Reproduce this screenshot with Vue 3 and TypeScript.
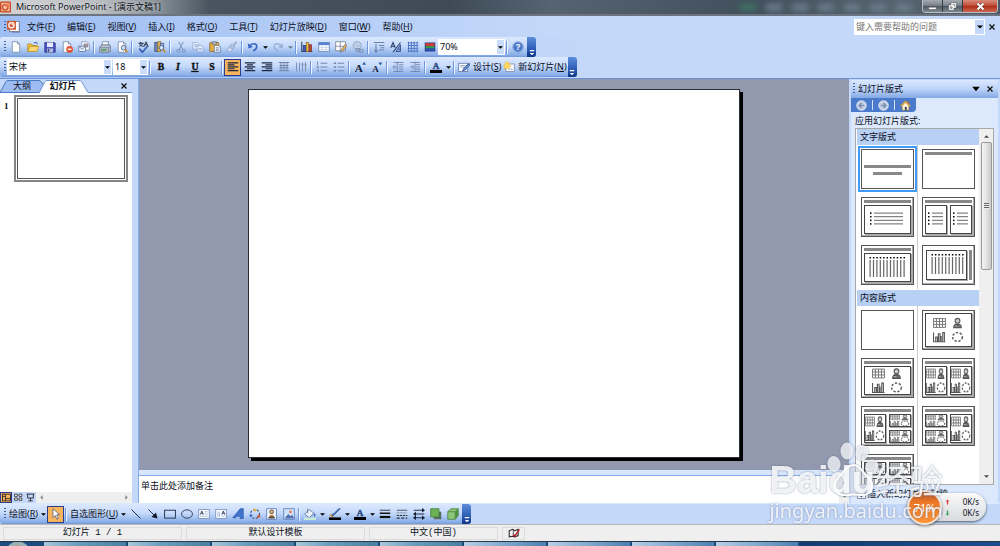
<script setup lang="ts">
import { ref } from 'vue'

interface Tool { t: 'icon' | 'sep' | 'arrow' | 'select' | 'label'; icon?: string; name?: string; key?: string; off?: boolean; on?: boolean; value?: string; size?: string }

const page = '<path d="M3 1h7l3 3v11H3z" fill="#fff" stroke="#6f7f9c"/><path d="M10 1v3h3" fill="#cdd8ec" stroke="#6f7f9c"/>'
const lens = '<circle cx="10" cy="9" r="3" fill="#cfe3f7" stroke="#4e6a96" stroke-width="1.3"/><path d="M12 11l3 4" stroke="#c88a34" stroke-width="2.4"/>'
const bars = (w: number[][]) => '<path d="' + w.map(([x, n], i) => `M${x} ${2.5 + i * 2.6}h${n}`).join('') + '" stroke="#1d2740" stroke-width="1.6"/>'
const letter = (c: string, extra = '') => `<text x="8" y="12" text-anchor="middle" font-family="Liberation Serif, serif" font-weight="bold" font-size="13" fill="#111" stroke="#111" stroke-width=".5" ${extra}>${c}</text>`

const icons: Record<string, string> = {
  ppt: '<rect x="3" y="2" width="12" height="12" fill="#fff" stroke="#7b6b78"/><path d="M6 15h10V4" fill="none" stroke="#677da5"/><rect x="0" y="1" width="11" height="11" fill="#d25a35"/><circle cx="5.5" cy="6.5" r="3.2" fill="none" stroke="#fff" stroke-width="1.6"/><path d="M5.500 6.500V3h3.500v3.500z" fill="#fbd6bd"/>',
  new: page,
  open: '<path d="M1 14V4h5l1 2h6v3" fill="#f5c94d" stroke="#ab8123"/><path d="M1 14l3-7h12l-3 7z" fill="#ffd970" stroke="#b88a23"/><path d="M9 3c2-2 4-1 5 1" fill="none" stroke="#426fb9" stroke-width="1.4"/>',
  save: '<path d="M1 2h13l1 1v12H1z" fill="#4b53c4" stroke="#303787"/><rect x="4" y="2" width="8" height="6" fill="#e8eeff"/><rect x="4" y="10" width="8" height="5" fill="#b5bdd8"/><path d="M6 11v3" stroke="#26306a" stroke-width="2"/>',
  perm: page + '<circle cx="11.500" cy="11" r="4.500" fill="#e2502d"/><path d="M9 11h5" stroke="#fff" stroke-width="1.800"/>',
  mail: '<path d="M5 1h7l3 3v8H5z" fill="#fff" stroke="#7788a8"/><path d="M8 4h5v4H8z" fill="#dd9d8f" stroke="#56719c"/><path d="M1 7h9v7H1z" fill="#e7eefb" stroke="#5c6f95"/><path d="M1 7l4.500 4L10 7" fill="none" stroke="#5c6f95"/>',
  print: '<path d="M5 1h8l-2 6H3z" fill="#fff" stroke="#6e7a90"/><path d="M1 8l3-3h10l2 3v5l-3 2H1z" fill="#b8c1d1" stroke="#5f6b82"/><path d="M1 9h12l3-2M13 9v6" fill="none" stroke="#6e7a90"/><path d="M3 12h7" stroke="#3f9a4a" stroke-width="2"/>',
  preview: page + lens,
  spell: '<path d="M2 3h7M5 1v3M3 7c3-1 4-2 5-4M3 3c1 3 3 4 6 4" fill="none" stroke="#28364f" stroke-width="1.300"/><path d="M9 8l3-7 3 7M10 5h4" fill="none" stroke="#28364f" stroke-width="1.300"/><path d="M3 10l4 5 7-8" fill="none" stroke="#3a62b5" stroke-width="2.400"/>',
  research: '<rect x="1" y="2" width="4" height="12" fill="#6e84bd" stroke="#3f5083"/><rect x="5" y="1" width="4" height="13" fill="#e5b755" stroke="#8a6a2b"/><rect x="9" y="3" width="4" height="8" fill="#9ebbe8" stroke="#3f5083"/>' + lens,
  cut: '<path d="M5 1l5 10M11 1L6 11" stroke="#6d83ab" stroke-width="1.500"/><circle cx="4.500" cy="13" r="2" fill="none" stroke="#6d83ab" stroke-width="1.400"/><circle cx="11.500" cy="13" r="2" fill="none" stroke="#6d83ab" stroke-width="1.400"/>',
  copy: '<path d="M1 2h6l2 2v7H1z" fill="#edf3ff" stroke="#7f93b7"/><path d="M7 6h6l2 2v7H7z" fill="#edf3ff" stroke="#7f93b7"/><path d="M3 5h4M3 7h4M9 10h4M9 12h4" stroke="#7f93b7"/>',
  paste: '<rect x="1" y="2" width="12" height="12" rx="1" fill="#e3ae42" stroke="#8a6420"/><path d="M4 1h6v3H4z" fill="#bac6db" stroke="#5d6a80"/><path d="M7 6h6l2 2v7H7z" fill="#fff" stroke="#586e99"/><path d="M9 9h4M9 11h4M9 13h4" stroke="#586e99"/>',
  brush: '<path d="M14 1l-4 5" stroke="#8495b2" stroke-width="2.500"/><path d="M7 4l5 4-3 3-5-3z" fill="#a9b8cf" stroke="#8495b2"/><path d="M4 8l5 3-4 4-4-2z" fill="#dce5f4" stroke="#8495b2"/>',
  undo: '<path d="M3 7c4-5 10-4 10 0 0 3-2 5-5 6" fill="none" stroke="#3567c2" stroke-width="2.200"/><path d="M1 3l1 7 6-2z" fill="#3567c2"/>',
  redo: '<path d="M13 7C9 2 3 3 3 7c0 3 2 5 5 6" fill="none" stroke="#8aa0c6" stroke-width="1.800"/><path d="M15 3l-1 7-6-2z" fill="#8aa0c6"/>',
  chart: '<path d="M1 1v13h14" fill="none" stroke="#38476b" stroke-width="1.500"/><rect x="3" y="6" width="3" height="8" fill="#385ec2" stroke="#273d80"/><rect x="7" y="2" width="3" height="12" fill="#f4c83c" stroke="#8a6420"/><rect x="11" y="5" width="3" height="9" fill="#cf4a38" stroke="#7b2c22"/>',
  table: '<rect x="1" y="2" width="14" height="12" fill="#fff" stroke="#5874a7"/><rect x="1" y="2" width="14" height="3.500" fill="#5683d3"/><path d="M1 8.500h14M1 11.500h14M5.500 5v9M10.500 5v9" stroke="#bdcbe5"/>',
  borders: '<rect x="1" y="1" width="13" height="12" fill="#fff" stroke="#727b8d"/><path d="M1 7h13M7 1v12" stroke="#727b8d"/><path d="M14 4l-6 8-1 3 3-1 6-8z" fill="#f1b43c" stroke="#5f6f9b"/>',
  link: '<circle cx="7" cy="6" r="5.500" fill="#aebed8" stroke="#7789aa"/><path d="M3 4c3 2 5-2 8 1M2 8c4-1 6 2 9 0" fill="none" stroke="#d9e3f2"/><rect x="5" y="10" width="6" height="4" rx="2" fill="none" stroke="#6d7e9c" stroke-width="1.500"/><rect x="9" y="11" width="6" height="4" rx="2" fill="none" stroke="#6d7e9c" stroke-width="1.500"/>',
  expand: '<path d="M1 2h14M4 4v10M2 12l2 3 2-3M8 6h7M10 9h5M8 12h7" fill="none" stroke="#6c83ad" stroke-width="1.500"/>',
  format: '<path d="M1 9L4 2l3 7M2 7h4M4 15L14 2" fill="none" stroke="#263b66" stroke-width="1.400"/><path d="M8 14l6-9v9zM11 11h3" fill="#84a2d5" stroke="#3b5b98" stroke-width="1.300"/>',
  grid: '<path d="M2 1v14M5.800 1v14M9.600 1v14M13.500 1v14M1 2.500h14M1 6h14M1 9.800h14M1 13.500h14" stroke="#4c74c2" stroke-width="1.300"/>',
  color: '<rect x="1" y="2" width="14" height="12" fill="#273f86"/><rect x="2" y="3" width="12" height="4" fill="#d83b35"/><rect x="2" y="7" width="12" height="3" fill="#2fa24b"/><rect x="2" y="10" width="12" height="3" fill="#2c51b8"/>',
  help: '<circle cx="8" cy="8" r="7" fill="#4c79ca" stroke="#8facdf" stroke-width="1.500"/><text x="8" y="12" text-anchor="middle" font-family="Liberation Sans, sans-serif" font-weight="bold" font-size="11" fill="#fff">?</text>',
  bold: letter('B'), italic: letter('I', 'font-style="italic"'), under: letter('U', 'text-decoration="underline"'), shadowS: letter('S'),
  left: bars([[1, 14], [1, 9], [1, 14], [1, 9], [1, 14]]),
  center: bars([[1, 14], [4, 8], [1, 14], [4, 8], [1, 14]]),
  right: bars([[1, 14], [6, 9], [1, 14], [6, 9], [1, 14]]),
  dist: '<path d="M1 2h14M2 6h12M2 9h12M1 13h14M4 2v11M8 2v11M12 2v11" stroke="#6f83aa" stroke-width="1.300"/>',
  vtext: '<path d="M2 2v12M6 2v12M10 4v10M14 4v10M9 6l1-3 1 3M13 6l1-3 1 3" fill="none" stroke="#7d92b8" stroke-width="1.400"/>',
  numbers: '<path d="M6 3h9M6 8h9M6 13h9M2 1v4M1 7h2v2H1M1 12h2v3" fill="none" stroke="#7186ae" stroke-width="1.300"/>',
  bullets: '<path d="M6 3h9M6 8h9M6 13h9" stroke="#7186ae" stroke-width="1.300"/><path d="M1 3h3M1 8h3M1 13h3" stroke="#7186ae" stroke-width="2"/>',
  grow: '<text x="6.500" y="14" text-anchor="middle" font-family="Liberation Serif, serif" font-weight="bold" font-size="15" fill="#18223d">A</text><path d="M11 5l2.500-4L16 5z" fill="#31569f"/>',
  shrink: '<text x="6" y="14" text-anchor="middle" font-family="Liberation Serif, serif" font-weight="bold" font-size="12" fill="#18223d">A</text><path d="M10 2h5l-2.500 4z" fill="#31569f"/>',
  outdent: '<path d="M2 2h13M9 5h6M9 8h6M9 11h6M2 14h13M7 8H2M4 5L1 8l3 3M7 1v14" fill="none" stroke="#6e84ae" stroke-width="1.200"/>',
  indent: '<path d="M2 2h13M9 5h6M9 8h6M9 11h6M2 14h13M1 8h5M4 5l3 3-3 3M8 1v14" fill="none" stroke="#6e84ae" stroke-width="1.200"/>',
  fontColor: '<text x="8" y="11" text-anchor="middle" font-family="Liberation Serif, serif" font-weight="bold" font-size="12" fill="#27457f" stroke="#27457f" stroke-width=".5">A</text><rect x="0" y="12" width="16" height="4" fill="#000"/>',
  design: '<rect x="1" y="3" width="12" height="11" fill="#fff" stroke="#546fa5"/><path d="M3 6h7M3 8h5" stroke="#8193b5"/><path d="M15 3l-7 6-2 4 4-1 6-7z" fill="#5d88d3" stroke="#36588e"/>',
  newSlide: '<rect x="4" y="4" width="11" height="10" fill="#fff" stroke="#7084a8"/><path d="M7 11h6" stroke="#7c92bc"/><path d="M5 0l1 3 3-1-1 3 3 2-3 1 0 3-3-2-3 2V8L0 6l3-1V2z" fill="#ffd95f" stroke="#e1ac2c" stroke-width=".6"/>',
  pointer: '<path d="M4 1v12l3-3 2 5 2-1-2-5h4z" fill="#fff" stroke="#4c5879"/>',
  line: '<path d="M2 2l12 12" stroke="#222c42" stroke-width="1.300"/>',
  lineArrow: '<path d="M2 2l8 8" stroke="#222c42" stroke-width="1.300"/><path d="M14 14l-2-8-6 6z" fill="#111827"/>',
  rect: '<rect x="0.700" y="3" width="14.600" height="10.500" fill="none" stroke="#35435f" stroke-width="1.400"/>',
  oval: '<ellipse cx="8" cy="8" rx="7.200" ry="5.600" fill="none" stroke="#35435f" stroke-width="1.300"/>',
  textBox: '<rect x="1" y="2" width="14" height="12" fill="#f7faff" stroke="#6f86af"/><path d="M3 9l2-5 2 5M4 7h3" fill="none" stroke="#1e2a43"/><path d="M9 5h4M9 8h4M3 11h10" stroke="#9cb0d1"/>',
  vTextBox: '<rect x="1" y="2" width="14" height="12" fill="#f7faff" stroke="#6f86af"/><path d="M9 9l2-5 2 5M10 7h3" fill="none" stroke="#1e2a43"/><path d="M4 5v7M6 5v7M9 11h4" stroke="#9cb0d1"/>',
  wordArt: '<path d="M1 13L11 1h4v13h-4v-3H6l-1 2zM8 8h3V5z" fill="#3d76d2" stroke="#2c57a5" fill-rule="evenodd"/>',
  diagram: '<circle cx="8" cy="8" r="6" fill="none" stroke="#445371" stroke-width="1.500" stroke-dasharray="3 2"/><circle cx="8" cy="2.500" r="2" fill="#e5b343"/><circle cx="2.500" cy="10" r="2" fill="#4775c6"/><circle cx="13" cy="11" r="2" fill="#d05a42"/>',
  clip: '<rect x="1" y="1" width="13" height="14" fill="#eef3ff" stroke="#5474ac"/><circle cx="7.500" cy="5" r="2.500" fill="#e8b269" stroke="#37332f"/><path d="M3 14c0-5 9-5 9 0z" fill="#524940"/><path d="M5 10h5" stroke="#e58b35" stroke-width="2"/>',
  picture: '<rect x="1" y="1" width="14" height="14" fill="#cfe0fb" stroke="#5474ac"/><circle cx="10" cy="5" r="2" fill="#e58362"/><path d="M2 14l5-6 3 3 2-2 3 5z" fill="#506eab"/>',
  fill: '<path d="M7 2l6 5-6 6-6-5z" fill="#eef3fb" stroke="#54688c"/><path d="M5 1v6" stroke="#54688c"/><path d="M13 6c3 2 3 4 1 6-2-2-1-4-1-6z" fill="#4b78c5"/><rect x="0" y="13" width="16" height="3" fill="#c8ead7"/>',
  lineColor: '<path d="M15 1L7 9l-3 3-2-2 5-3 6-6z" fill="#4b7cd1" stroke="#2a4c8e"/><path d="M1 10c2-2 5 0 3 2" fill="#f2b33b" stroke="#b8801f"/><rect x="0" y="12.500" width="16" height="3.500" fill="#000"/>',
  weights: '<path d="M1 3h14" stroke="#111"/><path d="M1 7h14" stroke="#111" stroke-width="2"/><path d="M1 12h14" stroke="#111" stroke-width="3"/>',
  dashes: '<path d="M1 3h14" stroke="#333"/><path d="M1 6.500h14" stroke="#333" stroke-dasharray="1 1"/><path d="M1 10h14" stroke="#333" stroke-width="1.400" stroke-dasharray="3 1"/><path d="M1 13.500h14" stroke="#333" stroke-width="1.400" stroke-dasharray="4 2"/>',
  arrows: '<path d="M1 3h13M2 8h13M1 13h14" stroke="#222c42" stroke-width="1.300"/><path d="M12 0l4 3-4 3zM4 5L0 8l4 3zM12 10l4 3-4 3zM4 10l-4 3 4 3z" fill="#17202f"/>',
  shadow: '<rect x="5" y="5" width="10" height="10" fill="#586b60"/><rect x="1" y="1" width="11" height="11" fill="#6bb254" stroke="#3d7c35"/>',
  cube: '<path d="M1 5l4-4h10v9l-4 5H1z" fill="#8bc575" stroke="#3d7c35"/><path d="M1 5h10v10M11 5l4-4" fill="none" stroke="#3d7c35"/><path d="M11 5l4-4v9l-4 5z" fill="#4e9145"/>',
  book: '<path d="M1 13V4l5-2 3 2 5-2v9l-5 2-3-1z" fill="#eee" stroke="#222" stroke-width="1.500"/><path d="M7 3v9" stroke="#222"/><path d="M7 9l2 3 7-10" fill="none" stroke="#b81e22" stroke-width="2"/>',
  back: '<circle cx="8" cy="8" r="7" fill="#c4cfe2" stroke="#f1f5fc"/><path d="M12 8H5M8 4.500L4.500 8 8 11.500" fill="none" stroke="#7b8eb2" stroke-width="2"/>',
  next: '<circle cx="8" cy="8" r="7" fill="#c4cfe2" stroke="#f1f5fc"/><path d="M4 8h7M8 4.500L11.500 8 8 11.500" fill="none" stroke="#7b8eb2" stroke-width="2"/>',
  home: '<path d="M11 2h2v5h-2z" fill="#c75b2d"/><path d="M3 8l5-5 5 5v7H3z" fill="#fff3d2" stroke="#86693c"/><path d="M1 9l7-7 7 7" fill="none" stroke="#e6a334" stroke-width="1.800"/><rect x="7" y="10" width="3" height="5" fill="#4a5270"/>',
  normal: '<rect x="1" y="2" width="14" height="12" fill="none" stroke="#222" stroke-width="1.500"/><path d="M6 2v12M6 10h9M1 6h5" stroke="#222" stroke-width="1.500"/>',
  sorter: '<path d="M1 2h5v4H1zM9 2h5v4H9zM1 9h5v4H1zM9 9h5v4H9z" fill="#fff" stroke="#222" stroke-width="1.400"/>',
  show: '<path d="M1 2h14M3 2v7h10V2M8 9v5M4 14h8" fill="none" stroke="#222" stroke-width="1.600"/>',
  close: '<path d="M4 4l8 8M12 4l-8 8" stroke="#111" stroke-width="2"/>',
}

const i = (icon: string, name: string, opt: Partial<Tool> = {}): Tool => ({ t: 'icon', icon, name, ...opt })
const sep: Tool = { t: 'sep' }
const arrow: Tool = { t: 'arrow' }

const standard: Tool[] = [
  i('new', '新建'), i('open', '打开'), i('save', '保存'), i('perm', '权限'), i('mail', '电子邮件'), sep,
  i('print', '打印'), i('preview', '打印预览'), sep, i('spell', '拼写检查'), i('research', '信息检索'), sep,
  i('cut', '剪切', { off: true }), i('copy', '复制', { off: true }), i('paste', '粘贴'), i('brush', '格式刷', { off: true }), sep,
  i('undo', '撤消'), arrow, i('redo', '恢复', { off: true }), { t: 'arrow', off: true }, sep,
  i('chart', '插入图表'), i('table', '插入表格'), i('borders', '表格和边框'), i('link', '超链接', { off: true }), sep,
  i('expand', '全部展开'), i('format', '显示格式'), i('grid', '网格'), i('color', '颜色/灰度'),
  { t: 'select', value: '70%', name: '显示比例', size: 'zoom' }, sep, i('help', '帮助'),
]
const formatting: Tool[] = [
  { t: 'select', value: '宋体', name: '字体', size: 'font' }, { t: 'select', value: '18', name: '字号', size: 'pt' }, sep,
  i('bold', '加粗'), i('italic', '倾斜'), i('under', '下划线'), i('shadowS', '阴影'), sep,
  i('left', '左对齐', { on: true }), i('center', '居中'), i('right', '右对齐'), i('dist', '分散对齐'), i('vtext', '更改文字方向'), sep,
  i('numbers', '编号'), i('bullets', '项目符号'), sep, i('grow', '增大字号'), i('shrink', '减小字号'), sep,
  i('outdent', '减少缩进量'), i('indent', '增加缩进量'), sep, i('fontColor', '字体颜色'), arrow, sep,
  { t: 'label', icon: 'design', name: '设计', key: 'S' }, { t: 'label', icon: 'newSlide', name: '新幻灯片', key: 'N' },
]
const drawing: Tool[] = [
  { t: 'label', name: '绘图', key: 'R' }, arrow, i('pointer', '选择对象', { on: true }), sep,
  { t: 'label', name: '自选图形', key: 'U' }, arrow,
  i('line', '直线'), i('lineArrow', '箭头'), i('rect', '矩形'), i('oval', '椭圆'), i('textBox', '文本框'), i('vTextBox', '竖排文本框'),
  i('wordArt', '艺术字'), i('diagram', '图示'), i('clip', '剪贴画'), i('picture', '图片'), sep,
  i('fill', '填充颜色'), arrow, i('lineColor', '线条颜色'), arrow, i('fontColor', '字体颜色'), arrow,
  i('weights', '线型'), i('dashes', '虚线线型'), i('arrows', '箭头样式'), i('shadow', '阴影样式'), i('cube', '三维效果样式'),
]
const toolbars = [{ id: 'standard', label: '常用', tools: standard }, { id: 'formatting', label: '格式', tools: formatting }]
const drawbars = [{ id: 'drawing', label: '绘图', tools: drawing }]

const menus = [['文件', 'F'], ['编辑', 'E'], ['视图', 'V'], ['插入', 'I'], ['格式', 'O'], ['工具', 'T'], ['幻灯片放映', 'D'], ['窗口', 'W'], ['帮助', 'H']]

interface Box { x: number; y: number; w: number; h: number; k?: 'rows' | 'cols' | 'art' }
interface Layout { name: string; bars: Box[]; boxes: Box[] }
const b = (x: number, y: number, w: number, h: number, k?: Box['k']): Box => ({ x, y, w, h, k })
const top = b(3, 3, 47, 3)
const groups: { title: string; items: Layout[] }[] = [
  { title: '文字版式', items: [
    { name: '标题幻灯片', bars: [b(3, 16, 47, 3), b(12, 23, 29, 3)], boxes: [] },
    { name: '只有标题', bars: [top], boxes: [] },
    { name: '标题和文本', bars: [top], boxes: [b(3, 8, 47, 29, 'rows')] },
    { name: '标题和两栏文本', bars: [top], boxes: [b(3, 8, 22, 29, 'rows'), b(28, 8, 22, 29, 'rows')] },
    { name: '标题和竖排文字', bars: [top], boxes: [b(3, 8, 47, 29, 'cols')] },
    { name: '垂直排列标题与文本', bars: [b(47, 5, 3, 30)], boxes: [b(4, 5, 41, 30, 'cols')] },
  ] },
  { title: '内容版式', items: [
    { name: '空白', bars: [], boxes: [] },
    { name: '内容', bars: [], boxes: [b(3, 3, 47, 34, 'art')] },
    { name: '标题和内容', bars: [top], boxes: [b(3, 8, 47, 29, 'art')] },
    { name: '标题和两项内容', bars: [top], boxes: [b(3, 8, 22, 29, 'art'), b(28, 8, 22, 29, 'art')] },
    { name: '一项大型内容和两项小型内容', bars: [top], boxes: [b(3, 8, 22, 29, 'art'), b(28, 8, 22, 13, 'art'), b(28, 24, 22, 13, 'art')] },
    { name: '两项小型内容和一项大型内容', bars: [top], boxes: [b(3, 8, 22, 13, 'art'), b(3, 24, 22, 13, 'art'), b(28, 8, 22, 29, 'art')] },
    { name: '标题和四项内容', bars: [top], boxes: [b(3, 8, 22, 13, 'art'), b(28, 8, 22, 13, 'art'), b(3, 24, 22, 13, 'art'), b(28, 24, 22, 13, 'art')] },
  ] },
]
const chosen = ref('标题幻灯片')

const colXs = (o: Box) => Array.from({ length: Math.floor((o.w - 10) / 3.4) + 1 }, (_, n) => o.x + 5.5 + n * 3.4)
const rowYs = (o: Box) => [0, 1, 2, 3].map(n => o.y + 8 + n * 3.6)
const arts = (o: Box) => {
  const wide = o.w > 30
  const w = wide ? 13 : 10
  const h = o.h > 20 ? 11 : 6
  const px = wide ? 8 : 1
  const py = o.h > 20 ? (o.h - 25) / 2 : 0.5
  return ['table', 'person', 'graph', 'cycle'].map((s, n) => ({
    s, w, h,
    x: n % 2 ? o.x + o.w - px - w : o.x + px,
    y: n > 1 ? o.y + o.h - py - h : o.y + py,
  }))
}
const notes = ref('单击此处添加备注')
const status = [{ id: 'current', text: '幻灯片 1 / 1' }, { id: 'theme', text: '默认设计模板' }, { id: 'lang', text: '中文(中国)' }]
</script>

<template>
  <div class="app">
    <svg class="defs" aria-hidden="true">
      <symbol id="art-table" viewBox="0 0 12 10" preserveAspectRatio="none"><path d="M.5 1h11v8H.5zM.5 3.600h11M.5 6.300h11M3.200 1v8M6 1v8M8.800 1v8" fill="none" stroke="#777" stroke-width=".9" /></symbol>
      <symbol id="art-person" viewBox="0 0 12 10" preserveAspectRatio="none"><circle cx="6" cy="3" r="2.200" fill="#ccc" stroke="#555" /><path d="M2.500 9c0-4 7-4 7 0zM3.500 6l4.500 2M2 9.500h8" fill="#aaa" stroke="#555" /></symbol>
      <symbol id="art-graph" viewBox="0 0 12 10" preserveAspectRatio="none"><path d="M.5 1v8.500h11M2.500 9V5h1.500v4M5 9V2h1.500v7M7.500 9V4M9 9V1h1.500v8" fill="none" stroke="#555" /></symbol>
      <symbol id="art-cycle" viewBox="0 0 12 10" preserveAspectRatio="none"><ellipse cx="6" cy="5" rx="4.500" ry="4" fill="none" stroke="#666" stroke-width="1.400" stroke-dasharray="2.200 1.400" /></symbol>
    </svg>

    <header class="titlebar">
      <svg class="logo" viewBox="0 0 16 16"><rect width="16" height="16" rx="2" fill="#c94c25" /><rect x="2" y="2" width="12" height="12" fill="#f7c5ab" /><circle cx="7.500" cy="8.500" r="4" fill="none" stroke="#c94c25" stroke-width="2" /><path d="M8 8V3h5v5z" fill="#e87b4d" /></svg>
      <h1>Microsoft PowerPoint - [演示文稿1]</h1>
      <div class="glass"><span v-for="n in 7" :key="n" /></div>
      <div class="winbtns">
        <button aria-label="最小化"><svg viewBox="0 0 12 12"><path d="M1 7h10v3H1z" fill="#fff" stroke="#444" stroke-width=".6" /></svg></button>
        <button aria-label="还原"><svg viewBox="0 0 12 12"><path d="M4 1h7v7H8v3H1V4h3z" fill="#fff" stroke="#444" stroke-width=".6" /><path d="M3.500 6.500h2v2h-2zM6 3.500h2.500V6" fill="none" stroke="#555" /></svg></button>
        <button class="x" aria-label="关闭"><svg viewBox="0 0 12 12"><path d="M2 2l8 8M10 2l-8 8" stroke="#63302a" stroke-width="4" /><path d="M2 2l8 8M10 2l-8 8" stroke="#fff" stroke-width="2.600" /></svg></button>
      </div>
    </header>

    <nav class="menubar">
      <span class="grip" />
      <svg class="docicon" viewBox="0 0 16 16" v-html="icons.ppt" />
      <button v-for="m in menus" :key="m[0]">{{ m[0] }}(<u>{{ m[1] }}</u>)</button>
      <div class="ask">
        <input type="text" aria-label="键入需要帮助的问题" placeholder="键入需要帮助的问题">
        <button class="askdrop" aria-label="历史问题"><svg viewBox="0 0 8 8"><path d="M0 2h8L4 6z" /></svg></button>
        <button aria-label="关闭窗口"><svg class="cross" viewBox="0 0 16 16" v-html="icons.close" /></button>
      </div>
    </nav>

    <div v-for="bar in toolbars" :key="bar.id" class="band">
      <div class="toolbar" role="toolbar" :aria-label="bar.label">
        <span class="grip" />
        <template v-for="(tool, n) in bar.tools" :key="n">
          <span v-if="tool.t === 'sep'" class="sep" />
          <button v-else-if="tool.t === 'arrow'" class="arrow" :class="{ off: tool.off }" aria-label="更多"><svg viewBox="0 0 8 8"><path d="M0 2h8L4 6z" /></svg></button>
          <label v-else-if="tool.t === 'select'" class="combo" :class="tool.size">
            <select :aria-label="tool.name"><option>{{ tool.value }}</option></select>
            <span class="drop"><svg viewBox="0 0 8 8"><path d="M0 2h8L4 6z" /></svg></span>
          </label>
          <button v-else-if="tool.t === 'label'" class="textbtn"><svg v-if="tool.icon" class="ico" viewBox="0 0 16 16" v-html="icons[tool.icon]" />{{ tool.name }}(<u>{{ tool.key }}</u>)</button>
          <button v-else class="tool" :class="{ on: tool.on, off: tool.off }" :aria-label="tool.name"><svg class="ico" viewBox="0 0 16 16" v-html="icons[tool.icon!]" /></button>
        </template>
        <button class="tail" aria-label="工具栏选项"><svg viewBox="0 0 8 8"><path d="M1 0h6v1.500H1zM1 4h6L4 7z" fill="#fff" /></svg></button>
      </div>
    </div>

    <main class="work">
      <aside class="outline">
        <div class="tabs">
          <svg class="tabshape" viewBox="0 0 132 14" aria-hidden="true"><path d="M0 13.500L6 2.500q.5-1 2-1h32l4 5-4 7z" fill="#9ebcf2" stroke="#4a79c4" /><path d="M39 14l6-11.500q.5-1 2-1h32q2 0 2.500 1L88 13.500h44" fill="#fff" stroke="#6f94d0" /><path d="M40 14h47" stroke="#fff" /></svg>
          <button class="tab">大纲</button>
          <button class="tab current">幻灯片</button>
          <button class="closepane" aria-label="关闭"><svg class="cross" viewBox="0 0 16 16" v-html="icons.close" /></button>
        </div>
        <div class="slides">
          <span class="num">1</span>
          <button class="mini" aria-label="幻灯片 1"><span /></button>
        </div>
        <div class="views">
          <button class="on" aria-label="普通视图"><svg viewBox="0 0 16 16" v-html="icons.normal" /></button>
          <button aria-label="幻灯片浏览视图"><svg viewBox="0 0 16 16" v-html="icons.sorter" /></button>
          <button aria-label="幻灯片放映"><svg viewBox="0 0 16 16" v-html="icons.show" /></button>
          <div class="hscroll"><svg viewBox="0 0 8 8"><path d="M6 0v8L2 4z" /></svg><svg viewBox="0 0 8 8"><path d="M2 0v8l4-4z" /></svg></div>
        </div>
      </aside>

      <section class="editor">
        <div class="canvas"><div class="slide" /></div>
        <div class="notes">
          <textarea v-model="notes" aria-label="备注" />
          <div class="nscroll"><svg viewBox="0 0 8 8"><path d="M0 6h8L4 2z" /></svg><svg viewBox="0 0 8 8"><path d="M0 2h8L4 6z" /></svg></div>
        </div>
      </section>

      <aside class="pane">
        <div class="panehead">
          <span class="grip" />
          <h2>幻灯片版式</h2>
          <button aria-label="其他任务窗格"><svg class="tri" viewBox="0 0 10 8"><path d="M0 1h10L5 7z" /></svg></button>
          <button aria-label="关闭"><svg class="cross" viewBox="0 0 16 16" v-html="icons.close" /></button>
        </div>
        <div class="panenav">
          <button aria-label="后退"><svg viewBox="0 0 16 16" v-html="icons.back" /></button><i />
          <button aria-label="前进"><svg viewBox="0 0 16 16" v-html="icons.next" /></button><i />
          <button aria-label="开始"><svg viewBox="0 0 16 16" v-html="icons.home" /></button>
        </div>
        <p class="apply">应用幻灯片版式:</p>
        <div class="listbox">
          <div class="list">
            <section v-for="g in groups" :key="g.title">
              <h3>{{ g.title }}</h3>
              <div class="cells">
                <div v-for="l in g.items" :key="l.name" class="cell">
                  <button :class="{ chosen: chosen === l.name }" :aria-label="l.name" @click="chosen = l.name">
                    <svg viewBox="0 0 53 40">
                      <rect x=".5" y=".5" width="52" height="39" fill="#fff" stroke="#555" />
                      <rect v-for="(r, n) in l.bars" :key="'b' + n" :x="r.x" :y="r.y" :width="r.w" :height="r.h" fill="#888" />
                      <template v-if="l.boxes.length">
                        <path d="M51.500 1v38M1 38.500h51" stroke="#aaa" />
                        <g v-for="(o, n) in l.boxes" :key="n">
                          <rect :x="o.x + 1" :y="o.y + 1" :width="o.w" :height="o.h" fill="#aaa" />
                          <rect :x="o.x + 0.5" :y="o.y + 0.5" :width="o.w - 1" :height="o.h - 1" fill="#fff" stroke="#444" />
                          <template v-if="o.k === 'rows'">
                            <g v-for="y in rowYs(o)" :key="y">
                              <rect :x="o.x + (o.w > 30 ? 6 : 3)" :y="y - 0.6" width="1.5" height="1.5" fill="#000" />
                              <rect :x="o.x + (o.w > 30 ? 10 : 7)" :y="y - 0.4" :width="o.w > 30 ? 29 : 11" height="1" fill="#666" />
                            </g>
                          </template>
                          <template v-else-if="o.k === 'cols'">
                            <g v-for="x in colXs(o)" :key="x">
                              <rect :x="x" :y="o.y + 4" width="1.5" height="1.500" fill="#000" />
                              <rect :x="x" :y="o.y + 7" width="1.2" height="17" fill="#666" />
                            </g>
                          </template>
                          <template v-else>
                            <use v-for="a in arts(o)" :key="a.s" :href="'#art-' + a.s" :x="a.x" :y="a.y" :width="a.w" :height="a.h" />
                          </template>
                        </g>
                      </template>
                    </svg>
                  </button>
                </div>
              </div>
            </section>
          </div>
          <div class="vscroll">
            <svg viewBox="0 0 8 8"><path d="M0 6h8L4 2z" /></svg>
            <span class="thumb"><i /></span>
            <svg class="down" viewBox="0 0 8 8"><path d="M0 2h8L4 6z" /></svg>
          </div>
        </div>
        <label class="insert"><input type="checkbox" checked>插入新幻灯片时放映</label>
      </aside>
    </main>

    <div v-for="bar in drawbars" :key="bar.id" class="band bottom">
      <div class="toolbar" role="toolbar" :aria-label="bar.label">
        <span class="grip" />
        <template v-for="(tool, n) in bar.tools" :key="n">
          <span v-if="tool.t === 'sep'" class="sep" />
          <button v-else-if="tool.t === 'arrow'" class="arrow" aria-label="更多"><svg viewBox="0 0 8 8"><path d="M0 2h8L4 6z" /></svg></button>
          <button v-else-if="tool.t === 'label'" class="textbtn pad">{{ tool.name }}(<u>{{ tool.key }}</u>)</button>
          <button v-else class="tool" :class="{ on: tool.on }" :aria-label="tool.name"><svg class="ico" viewBox="0 0 16 16" v-html="icons[tool.icon!]" /></button>
        </template>
        <button class="tail" aria-label="工具栏选项"><svg viewBox="0 0 8 8"><path d="M1 0h6v1.500H1zM1 4h6L4 7z" fill="#fff" /></svg></button>
      </div>
    </div>

    <footer class="status">
      <span v-for="s in status" :key="s.id" :class="s.id">{{ s.text }}</span>
      <span class="proof"><svg viewBox="0 0 16 16" v-html="icons.book" /></span>
    </footer>
    <div class="taskbar">
      <span class="orb" />
      <span v-for="n in 9" :key="n" class="task" />
      <span class="tray" />
    </div>

    <div class="meter">
      <div class="ball">71%</div>
      <div class="speeds">
        <span><svg viewBox="0 0 8 8"><path d="M4 0l3 3H5v5H3V3H1z" fill="#e03c3c" /></svg>0K/s</span>
        <span><svg viewBox="0 0 8 8"><path d="M4 8l3-3H5V0H3v5H1z" fill="#2aa04a" /></svg>0K/s</span>
      </div>
    </div>

    <div class="watermark">
      <div class="brand">
        <span class="latin">Baidu</span>
        <svg class="paw" viewBox="0 0 56 54" aria-hidden="true"><g fill="#fff" fill-opacity=".75"><ellipse cx="9" cy="22" rx="6.500" ry="8" transform="rotate(-8 9 22)" /><ellipse cx="22" cy="9" rx="6.500" ry="8.500" /><ellipse cx="37" cy="11" rx="6.500" ry="8" transform="rotate(12 37 11)" /><ellipse cx="47" cy="25" rx="6.500" ry="7.500" transform="rotate(12 47 25)" /></g><path d="M29 23c6 0 8 7 13 11 8 7 7 19-5 19-5 0-9-1-14 0-12 2-17-9-10-17 6-6 9-13 16-13z" fill="#fff" fill-opacity=".35" stroke="#fff" stroke-width="2" /></svg>
        <span class="jy">经验</span>
      </div>
      <div class="site">jingyan.baidu.com</div>
    </div>
  </div>
</template>

<style>
html, body { margin: 0; overflow: hidden; }
</style>

<style scoped>
* { box-sizing: border-box; }
.app { position: relative; display: flex; flex-direction: column; height: 100vh; overflow: hidden; background: #c4d8f9; color: #0b0f1a; font: 9px/12px "Noto Sans", "Noto Sans CJK SC", sans-serif; }
.defs { position: absolute; width: 0; height: 0; }
svg { display: block; flex: none; }
button { display: flex; align-items: center; justify-content: center; flex: none; margin: 0; padding: 0; border: 0; background: none; color: inherit; font: inherit; white-space: nowrap; }
h1, h2, h3, p { margin: 0; font-size: 9px; font-weight: normal; }
.grip { flex: none; width: 2px; height: 12px; margin: 0 1px 0 4px; background: repeating-linear-gradient(#44609b 0 1px, transparent 1px 3px); }

.titlebar { display: flex; align-items: center; flex: none; height: 16px; border-bottom: 2px solid #6b7480; background: linear-gradient(90deg, #d3d4d4, #b9bdc0 10%, #838d94 16%, #48545f 21%, #3e4b57 45%, #566371 55%, #42505d 75%, #56636f 90%, #4a5763); overflow: hidden; }
.logo { width: 11px; height: 12px; }
.titlebar h1 { margin-left: 5px; font: 9px/14px "Open Sans", "Noto Sans CJK SC", sans-serif; white-space: nowrap; text-shadow: 0 0 4px #e8e8e8; }
.glass { display: flex; flex: 1; justify-content: flex-end; gap: 10px; padding-right: 10px; filter: blur(3px); }
.glass span { width: 16px; height: 7px; background: #6d7f8e; }
.glass span:first-child { background: #3f7564; }
.winbtns { display: flex; align-self: flex-start; height: 13px; margin-right: 2px; border: 1px solid #b9c0c7; border-top: 0; border-radius: 0 0 4px 4px; overflow: hidden; }
.winbtns button { width: 20px; background: linear-gradient(#a3a9af, #7b838b 45%, #4d5761 50%, #7e8890); border-right: 1px solid #333c45; }
.winbtns .x { width: 34px; border: 0; background: linear-gradient(#d98c7c, #c4503a 45%, #ab2d17 50%, #d1664c); }
.winbtns svg { width: 9px; height: 9px; }

.menubar { display: flex; align-items: center; flex: none; height: 21px; background: linear-gradient(90deg, #9ebdf3, #c4d8f9 55%); }
.docicon { width: 13px; height: 13px; margin-right: 1px; }
.menubar > button { padding: 0 6px; height: 18px; }
.ask { display: flex; align-items: center; margin-left: auto; padding-right: 2px; }
.ask input { width: 121px; height: 16px; padding: 0 2px; border: 0; background: #fff; font: inherit; outline: 0; }
.ask input::placeholder { color: #777; opacity: 1; }
.ask .askdrop { width: 10px; height: 16px; border: 1px solid #fff; border-left: 0; }
.ask button:last-child { width: 12px; margin-left: 1px; }
.askdrop svg { width: 6px; height: 6px; }
.cross { width: 10px; height: 10px; }

.band { display: flex; flex: none; height: 20px; background: linear-gradient(90deg, #a8c4f5, #c4d8f9 60%); }
.band.bottom { height: 21px; border-top: 1px solid #dbe8fd; background: #c4d8f9; }
.band + .band { height: 21px; }
.toolbar { display: flex; align-items: center; height: 20px; border-radius: 3px; background: linear-gradient(#dce9fe, #c6dafb 45%, #86ace6 92%, #6f95d5); }
.tool { width: 17px; height: 17px; }
.ico { width: 12px; height: 12px; }
.tool.off .ico { opacity: .7; }
.tool.on { border: 1px solid #2c3b8e; background: #f9b45e; }
.sep { flex: none; width: 1px; height: 13px; margin: 0 2px 0 1px; background: #6f98da; box-shadow: 1px 0 #eef5ff; }
.arrow { width: 8px; height: 16px; }
.arrow svg { width: 5px; height: 5px; }
.arrow.off { opacity: .45; }
.textbtn { height: 17px; }
.textbtn .ico { margin: 0 3px 0 2px; }
.textbtn.pad { padding: 0 1px 0 2px; }
.tail { align-items: flex-end; width: 9px; height: 20px; margin-left: 1px; padding-bottom: 1px; border-radius: 0 3px 3px 0; background: linear-gradient(#5d8ddb, #3465bc 50%, #0c358b); }
.tail svg { width: 6px; height: 6px; }
.combo { position: relative; display: flex; height: 16px; background: #fff; }
.combo select { flex: 1; min-width: 0; padding: 0 2px; border: 0; background: #fff; color: #0b0f1a; font: 9px/16px "Noto Sans", "Noto Sans CJK SC", sans-serif; appearance: none; }
.combo.font { width: 105px; }
.combo.pt { width: 35px; margin-left: 1px; }
.combo.zoom { width: 67px; }
.drop { display: flex; align-items: center; justify-content: center; width: 9px; border: 1px solid #fff; background: #c9dcfa; }
.drop svg { width: 5px; height: 5px; }

.work { display: flex; flex: 1; min-height: 0; border-top: 1px solid #6b95d8; }
.outline { display: flex; flex: none; flex-direction: column; width: 132px; background: #fff; }
.tabs { position: relative; display: flex; align-items: center; height: 14px; background: #c4d8f9; }
.tabshape { position: absolute; left: 0; top: 0; width: 132px; height: 14px; }
.tab { position: relative; width: 44px; height: 14px; }
.tab.current { width: 38px; font-weight: bold; }
.closepane { position: relative; width: 12px; margin: 0 2px 0 auto; }
.slides { display: flex; flex: 1; padding: 2px 4px 0 4px; }
.num { width: 10px; margin-top: 5px; font: bold 9px/12px "Liberation Serif", serif; }
.mini { align-self: flex-start; flex: 1; height: 87px; padding: 1px; border: 2px solid #858585; background: #fff; }
.mini span { width: 100%; height: 100%; border: 1px solid #555; }
.views { display: flex; align-items: center; height: 11px; background: #c4d8f9; }
.views button { width: 12px; height: 11px; }
.views button.on { border: 1px solid #2c3b8e; background: #f9b45e; }
.views svg { width: 9px; height: 9px; }
.hscroll { display: flex; flex: 1; justify-content: space-between; align-items: center; height: 11px; padding: 0 3px; background: #efefef; }
.hscroll svg { width: 5px; height: 5px; fill: #888; }

.editor { display: flex; flex: 1; flex-direction: column; min-width: 0; margin-left: 6px; border-left: 1px solid #84abe8; }
.canvas { display: flex; flex: 1; justify-content: center; min-height: 0; padding: 10px 0 12px; background: #9299ae; }
.slide { height: 100%; aspect-ratio: 4 / 3; border: 1px solid #2a2d35; background: #fff; box-shadow: 3px 3px #000; }
.notes { display: flex; height: 28px; margin-top: 5px; border-top: 1px solid #84abe8; background: #fff; box-shadow: 0 -5px #d8e6fd; }
.notes textarea { flex: 1; padding: 4px 2px; border: 0; outline: 0; resize: none; overflow: hidden; background: #fff; color: inherit; font: 9px/12px "Noto Sans CJK SC", sans-serif; }
.nscroll { display: flex; flex-direction: column; justify-content: space-between; align-items: center; width: 10px; padding: 4px 0; background: #efefef; }
.nscroll svg { width: 5px; height: 5px; fill: #888; }

.pane { display: flex; flex: none; flex-direction: column; width: 147px; margin: 1px 2px 0 2px; background: #dce9fd; }
.panehead { display: flex; align-items: center; flex: none; height: 18px; padding-right: 1px; background: linear-gradient(#dce9fe, #bcd2f8 50%, #83a9e4); }
.panehead h2 { flex: 1; margin-left: 0; }
.panehead .grip { margin: 0 3px 0 2px; }
.panehead button { width: 14px; height: 16px; }
.tri { width: 8px; height: 6px; }
.panenav { display: flex; align-items: center; flex: none; align-self: flex-start; height: 14px; padding: 0 3px; border-radius: 0 0 4px 0; background: #4a7acb; }
.panenav button { width: 15px; }
.panenav svg { width: 11px; height: 11px; }
.panenav i { width: 1px; height: 10px; margin: 0 3px; background: #d6e3fa; }
.apply { flex: none; padding: 3px 4px 1px; }
.listbox { display: flex; flex: 1; min-height: 0; margin: 0 4px 0 4px; border: 1px solid #a9a9a9; background: #fff; overflow: hidden; }
.list { flex: 1; min-width: 0; padding-left: 1px; overflow: hidden; }
.list h3 { height: 16px; padding-left: 3px; background: #b9d0f5; line-height: 16px; }
.list section { margin-bottom: 1px; }
.cells { display: grid; grid-template-columns: 1fr 1fr; }
.cell { display: flex; align-items: center; justify-content: center; height: 48px; }
.cell:nth-child(odd) { border-right: 1px solid #ccc; }
.cell button { padding: 0; }
.cell button.chosen { box-shadow: 0 0 0 1px #fff, 0 0 0 3px #3f9bfa; }
.cell svg { width: 53px; height: 40px; }
.vscroll { display: flex; flex-direction: column; align-items: center; width: 14px; padding: 5px 1px; background: #efefef; }
.vscroll svg { width: 5px; height: 5px; fill: #444; }
.vscroll .down { margin-top: auto; }
.thumb { display: flex; align-items: center; justify-content: center; width: 11px; height: 37%; margin-top: 3px; border: 1px solid #999; border-radius: 2px; background: linear-gradient(90deg, #f5f5f5, #e2e2e2 50%, #cacaca); }
.thumb i { width: 5px; height: 6px; background: repeating-linear-gradient(#666 0 1px, #eee 1px 2px); }
.insert { display: flex; align-items: center; flex: none; height: 18px; padding-left: 6px; white-space: nowrap; }
.insert input { display: flex; align-items: center; justify-content: center; width: 9px; height: 9px; margin: 0 1px 0 0; border: 1px solid #8a93a5; background: #fff; appearance: none; }
.insert input:checked::after { content: ""; width: 5px; height: 3px; border: solid #4c5f94; border-width: 0 0 1px 1px; transform: rotate(-45deg); }

.status { display: flex; align-items: center; flex: none; gap: 4px; height: 17px; padding: 0 3px; border-top: 1px solid #b8b8b8; background: #efefef; font-family: "Liberation Mono", "Noto Sans CJK SC", monospace; white-space: pre; }
.status span { display: flex; align-items: center; justify-content: center; height: 13px; border: 1px solid #dcdcdc; }
.status .current, .status .theme { flex: none; width: 179px; }
.status .lang { width: 129px; }
.status .proof { width: 23px; }
.status svg { width: 14px; height: 11px; }

.taskbar { display: flex; flex: none; gap: 2px; height: 5px; border-top: 1px solid #26384a; background: #1d4c80; overflow: hidden; }
.orb { width: 42px; background: radial-gradient(circle at 18px 12px, #d97c3e 0 8px, #97b3b8 9px 12px, transparent 13px); }
.task { flex: 1; background: linear-gradient(90deg, #a9c9da, #6a9fbd 40%, #47809f); }
.task:nth-last-child(-n + 5) { background: linear-gradient(90deg, #b9d0e6, #7fa9cc 50%, #4c80b0); }
.tray { width: 20%; background: linear-gradient(90deg, #123c76, #1b4f8c); }

.watermark { position: absolute; right: 57px; bottom: 23px; color: rgba(255, 255, 255, .85); white-space: nowrap; pointer-events: none; filter: drop-shadow(0 0 1px rgba(80, 95, 130, .7)); }
.brand { position: relative; display: flex; align-items: flex-end; justify-content: space-between; height: 56px; }
.latin { font: bold 38px/38px "Liberation Sans", sans-serif; }
.paw { position: absolute; left: 56px; bottom: 3px; width: 56px; height: 54px; }
.jy { font: 34px/38px "Noto Sans CJK SC", sans-serif; }
.site { font: 20px/24px "Noto Sans", sans-serif; }

.meter { position: absolute; right: 14px; bottom: 25px; display: flex; align-items: center; width: 78px; height: 28px; border-radius: 14px; background: linear-gradient(#fafafa, #d8dade); box-shadow: 0 1px 3px rgba(0, 0, 0, .6); }
.ball { flex: none; width: 35px; height: 35px; margin-left: -1px; border: 2px solid #f1e4da; border-radius: 50%; background: linear-gradient(#b3522a, #ee7a26 35%, #ff9433); color: #fff; font: 11px/31px "Noto Sans", sans-serif; text-align: center; box-shadow: 0 1px 3px rgba(0, 0, 0, .5); }
.speeds { flex: 1; padding: 0 7px 0 3px; font: 8px/11px "Noto Sans", sans-serif; }
.speeds span { display: flex; align-items: center; justify-content: space-between; }
.speeds svg { width: 5px; height: 6px; }
</style>
